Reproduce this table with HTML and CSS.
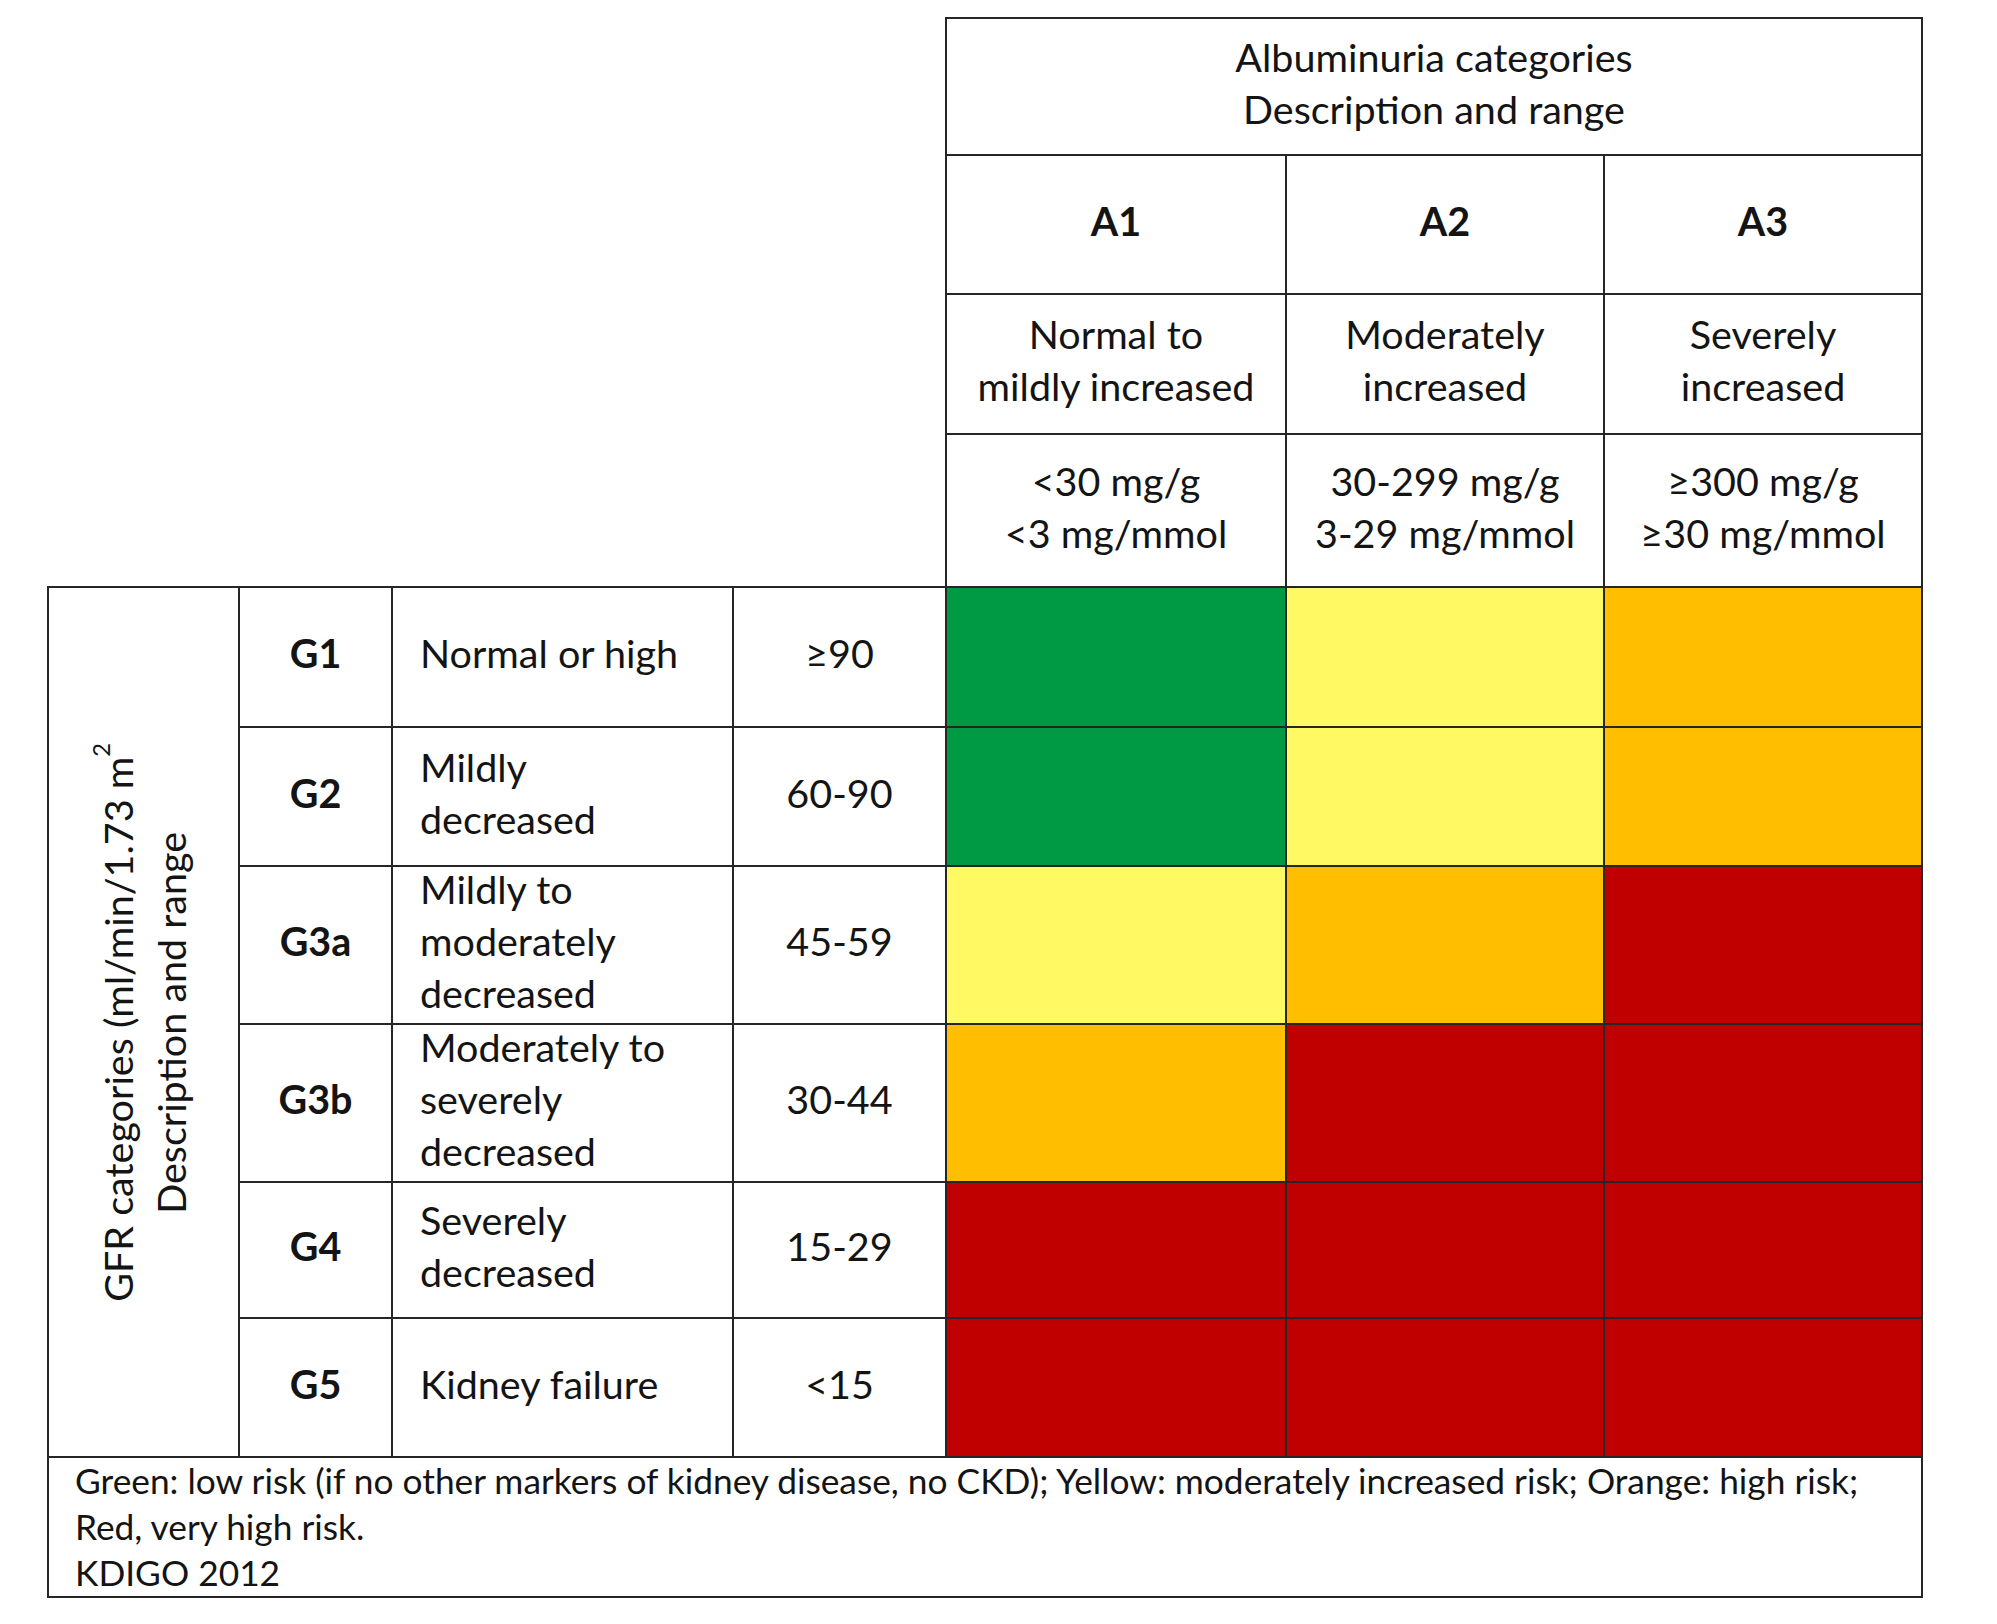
FILE: index.html
```html
<!DOCTYPE html>
<html lang="en">
<head>
<meta charset="utf-8">
<title>KDIGO 2012 CKD risk chart</title>
<link rel="stylesheet" href="styles.css">
</head>
<body>
<div class="chart">
  <div class="corner"></div>
  <div class="cell alb last">Albuminuria categories<br>Description and range</div>

  <div class="cell bold">A1</div>
  <div class="cell bold">A2</div>
  <div class="cell bold last">A3</div>

  <div class="cell">Normal to<br>mildly increased</div>
  <div class="cell">Moderately<br>increased</div>
  <div class="cell last">Severely<br>increased</div>

  <div class="cell">&lt;30 mg/g<br>&lt;3 mg/mmol</div>
  <div class="cell">30-299 mg/g<br>3-29 mg/mmol</div>
  <div class="cell last">&ge;300 mg/g<br>&ge;30 mg/mmol</div>

  <div class="cell gfr-label"><span class="vertical">GFR categories (ml/min/1.73 m<sup>2</sup><br>Description and range</span></div>

  <div class="cell bold">G1</div>
  <div class="cell desc">Normal or high</div>
  <div class="cell">&ge;90</div>
  <div class="cell green"></div>
  <div class="cell yellow"></div>
  <div class="cell orange last"></div>

  <div class="cell bold">G2</div>
  <div class="cell desc">Mildly<br>decreased</div>
  <div class="cell">60-90</div>
  <div class="cell green"></div>
  <div class="cell yellow"></div>
  <div class="cell orange last"></div>

  <div class="cell bold">G3a</div>
  <div class="cell desc">Mildly to<br>moderately<br>decreased</div>
  <div class="cell">45-59</div>
  <div class="cell yellow"></div>
  <div class="cell orange"></div>
  <div class="cell red last"></div>

  <div class="cell bold">G3b</div>
  <div class="cell desc">Moderately to<br>severely<br>decreased</div>
  <div class="cell">30-44</div>
  <div class="cell orange"></div>
  <div class="cell red"></div>
  <div class="cell red last"></div>

  <div class="cell bold">G4</div>
  <div class="cell desc">Severely<br>decreased</div>
  <div class="cell">15-29</div>
  <div class="cell red"></div>
  <div class="cell red"></div>
  <div class="cell red last"></div>

  <div class="cell bold">G5</div>
  <div class="cell desc">Kidney failure</div>
  <div class="cell">&lt;15</div>
  <div class="cell red"></div>
  <div class="cell red"></div>
  <div class="cell red last"></div>

  <div class="footer">Green: low risk (if no other markers of kidney disease, no CKD); Yellow: moderately increased risk; Orange: high risk;<br>Red, very high risk.<br>KDIGO 2012</div>
</div>
</body>
</html>
```
FILE: styles.css
```css
html, body {
  margin: 0;
  padding: 0;
  background: #ffffff;
}

body {
  font-family: Lato, "Open Sans", "Liberation Sans", sans-serif;
  color: #141414;
}

.chart {
  display: grid;
  grid-template-columns: 191px 153px 341px 213px 340px 318px 320px;
  grid-template-rows: 137px 139px 140px 153px 140px 139px 158px 158px 136px 139px 142px;
  width: max-content;
  margin: 17px 0 0 47px;
  font-size: 39.5px;
  line-height: 52px;
}

.corner {
  grid-column: 1 / 5;
  grid-row: 1 / 5;
}

.cell {
  box-sizing: border-box;
  border-left: 2px solid #262626;
  border-top: 2px solid #262626;
  padding-bottom: 8px;
  display: flex;
  align-items: center;
  justify-content: center;
  text-align: center;
}

.cell.last {
  border-right: 2px solid #262626;
}

.alb {
  grid-column: 5 / 8;
}

.bold {
  font-weight: 700;
}

.desc {
  justify-content: flex-start;
  text-align: left;
  padding-left: 27px;
}

.gfr-label {
  grid-row: span 6;
  padding-bottom: 0;
}

.vertical {
  writing-mode: vertical-rl;
  transform: rotate(180deg);
  text-align: center;
  line-height: 53px;
}

.vertical sup {
  font-size: 0.6em;
  line-height: 0;
  vertical-align: 0.7em;
}

.green { background: #009944; }
.yellow { background: #fffa64; }
.orange { background: #ffbf00; }
.red { background: #c00000; }

.footer {
  grid-column: 1 / -1;
  box-sizing: border-box;
  border: 2px solid #262626;
  padding: 0 0 0 26px;
  font-size: 35.3px;
  line-height: 46px;
  text-align: left;
}
```
